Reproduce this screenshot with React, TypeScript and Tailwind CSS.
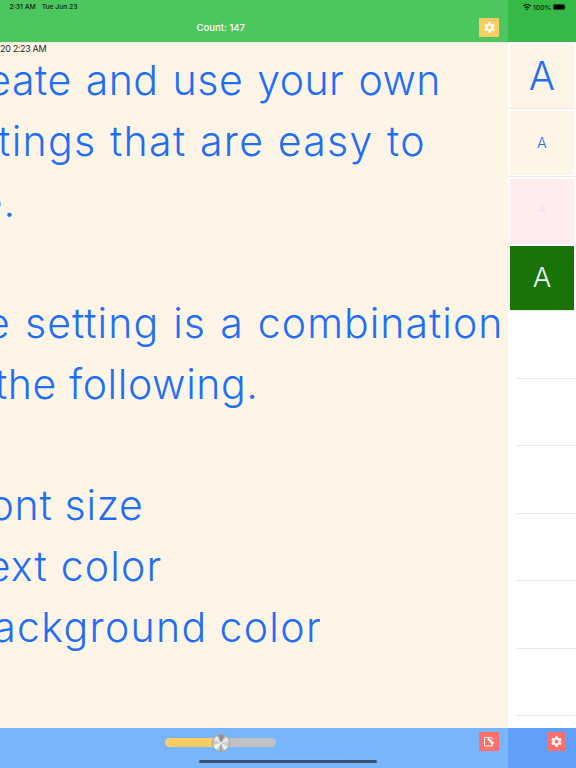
import React from "react";
import { MdSettings } from "react-icons/md";

const lines = [
  { text: "eate and use your own", cls: "w-[441px] tracking-[0.5px] [word-spacing:2px]" },
  { text: "tings that are easy to", cls: "w-[426px] tracking-[1.35px] [word-spacing:0.5px]" },
  { text: "e.", cls: "w-[16px] tracking-[1px]" },
  { text: "", cls: "w-0" },
  { text: "e setting is a combination", cls: "w-[503.5px] tracking-[1.05px] [word-spacing:1.5px]" },
  { text: "the following.", cls: "w-[258.5px] tracking-[0.6px]" },
  { text: "", cls: "w-0" },
  { text: "ont size", cls: "w-[143.5px] tracking-[0.7px]" },
  { text: "ext color", cls: "w-[162.5px] tracking-[1.2px]" },
  { text: "ackground color", cls: "w-[322px] tracking-[1.35px] [word-spacing:-1px]" },
];

const presets = [
  { box: "bg-[#fff5e6] text-[#1f6ff5]", size: "text-[39px]" },
  { box: "bg-[#fff5e6] text-[#1f6ff5]", size: "text-[14.5px]" },
  { box: "bg-[#ffeded] text-[#d5defa]", size: "text-[9.5px]" },
  { box: "bg-[#1a7306] text-[#eef5ff]", size: "text-[27.5px]" },
];

function StatusIcons() {
  return (
    <svg className="h-[14px] w-[54px]" viewBox="0 0 54 14">
      <g fill="none" stroke="#0b240f" strokeWidth="1.3">
        <path d="M1.2 6.1Q5 2.7 8.8 6.1" />
        <path d="M2.8 7.9Q5 5.9 7.2 7.9" />
      </g>
      <path d="M3.7 8.9Q5 7.9 6.3 8.9L5 10.2Z" fill="#0b240f" />
      <text x="11" y="9.5" fontFamily="Inter, sans-serif" fontSize="6.8" fontWeight="500" fill="#0b240f">100%</text>
      <rect x="31.4" y="4.5" width="11.2" height="4.9" rx="1.2" fill="#000" />
      <rect x="31.2" y="4.2" width="11.6" height="5.5" rx="1.4" fill="none" stroke="#174d20" strokeWidth=".4" />
      <path d="M43.4 6v1.8q.8-.3.8-.9T43.4 6Z" fill="#174d20" />
    </svg>
  );
}

function EditIcon() {
  return (
    <svg className="size-[12px]" viewBox="0 0 12 12" fill="none" stroke="#fff">
      <path d="M5.5 1.5H1.5V10H9.3V7.8" strokeWidth="1" />
      <path d="M5.2 1.5H9.2V4" strokeWidth=".8" />
      <path d="M5 2.5 9.9 7.7" strokeWidth="2" />
      <path d="M8 7.8H10.2V5.5" strokeWidth="1" />
    </svg>
  );
}

function Knob() {
  return (
    <div className="absolute top-[-4.5px] left-[47px] size-[18px] rounded-full border border-[#a5a5a5] bg-[conic-gradient(#8b8b8b_0deg,#999_20deg,#eee_50deg,#ddd_75deg,#c4c4c4_100deg,#f7f7f7_140deg,#ccc_160deg,#999_180deg,#ddd_210deg,#fff_235deg,#c4c4c4_270deg,#ddd_295deg,#f4f4f4_320deg,#8b8b8b_350deg)]" />
  );
}

export default function App() {
  return (
    <div className="flex h-[768px] w-[576px] overflow-hidden bg-white font-['Inter',sans-serif]">
      <main className="relative flex w-[508px] shrink-0 flex-col bg-[#fff5e6]">
        <header className="flex h-[42px] shrink-0 flex-col bg-[#4cc65e]">
          <div className="flex h-[14px] items-center gap-[6px] pl-[9.5px] text-[6.8px] font-medium leading-none text-[#0b240f]">
            <span>2:31 AM</span>
            <span className="tracking-[-0.05px]">Tue Jun 23</span>
          </div>
          <div className="flex h-[28px] items-center justify-end pr-[9px]">
            <span className="mr-[234px] text-[9.5px] font-medium leading-none whitespace-nowrap text-white">Count: 147</span>
            <button className="mb-px flex h-[19px] w-[20px] items-center justify-center bg-[#ffcb64] text-white">
              <MdSettings size={13} />
            </button>
          </div>
        </header>
        <section className="min-h-0 flex-1 overflow-hidden border-t border-[#f3ecdc]">
          <div className="h-[7px] pt-px text-[9px] leading-[10px] tracking-[-0.35px] whitespace-nowrap text-[#25221e]">20 2:23 AM</div>
          <div className="text-[41px] font-[320] leading-[60.75px] text-[#1f6ff5]">
            {lines.map((line, i) => (
              <div key={i} className="h-[60.75px]">
                <div className={`flex justify-end whitespace-pre ${line.cls}`}>{line.text}</div>
              </div>
            ))}
          </div>
        </section>
        <footer className="flex h-[40px] shrink-0 justify-end bg-[#78b5fa] pt-[4px] pr-[9px]">
          <div className="relative mt-[6px] mr-[203px] flex h-[8.5px] w-[111px]">
            <div className="h-full w-[56px] rounded-l-full bg-[#ffcb64]" />
            <div className="h-full flex-1 rounded-r-full bg-[#c0c1c2]" />
            <Knob />
          </div>
          <button className="flex h-[19px] w-[20px] items-center justify-center bg-[#ff706c]">
            <EditIcon />
          </button>
        </footer>
        <div className="absolute top-[760px] left-[199px] h-[3px] w-[178px] rounded-full bg-[#355070]" />
      </main>
      <aside className="flex w-[68px] shrink-0 flex-col bg-white">
        <header className="h-[42px] shrink-0 bg-[#35ba48] pl-[14px]">
          <StatusIcons />
        </header>
        <div className="min-h-0 flex-1 overflow-hidden">
          <div className="-mt-[0.2px]">
            {presets.map((p, i) => (
              <div key={i} className="h-[67.4px] border-b border-[#ebebeb] px-[2px] pt-[2px]">
                <div className={`flex h-[64px] items-center justify-center font-[360] ${p.box} ${p.size}`}>A</div>
              </div>
            ))}
            {[0, 1, 2, 3, 4, 5].map((i) => (
              <div key={i} className="ml-[8px] h-[67.5px] border-b border-[#e6e6e6]" />
            ))}
          </div>
        </div>
        <footer className="flex h-[40px] shrink-0 justify-end bg-[#60a0fb] pt-[4px] pr-[10px]">
          <button className="flex size-[19px] items-center justify-center bg-[#ff706c] text-white">
            <MdSettings size={13} />
          </button>
        </footer>
      </aside>
    </div>
  );
}
